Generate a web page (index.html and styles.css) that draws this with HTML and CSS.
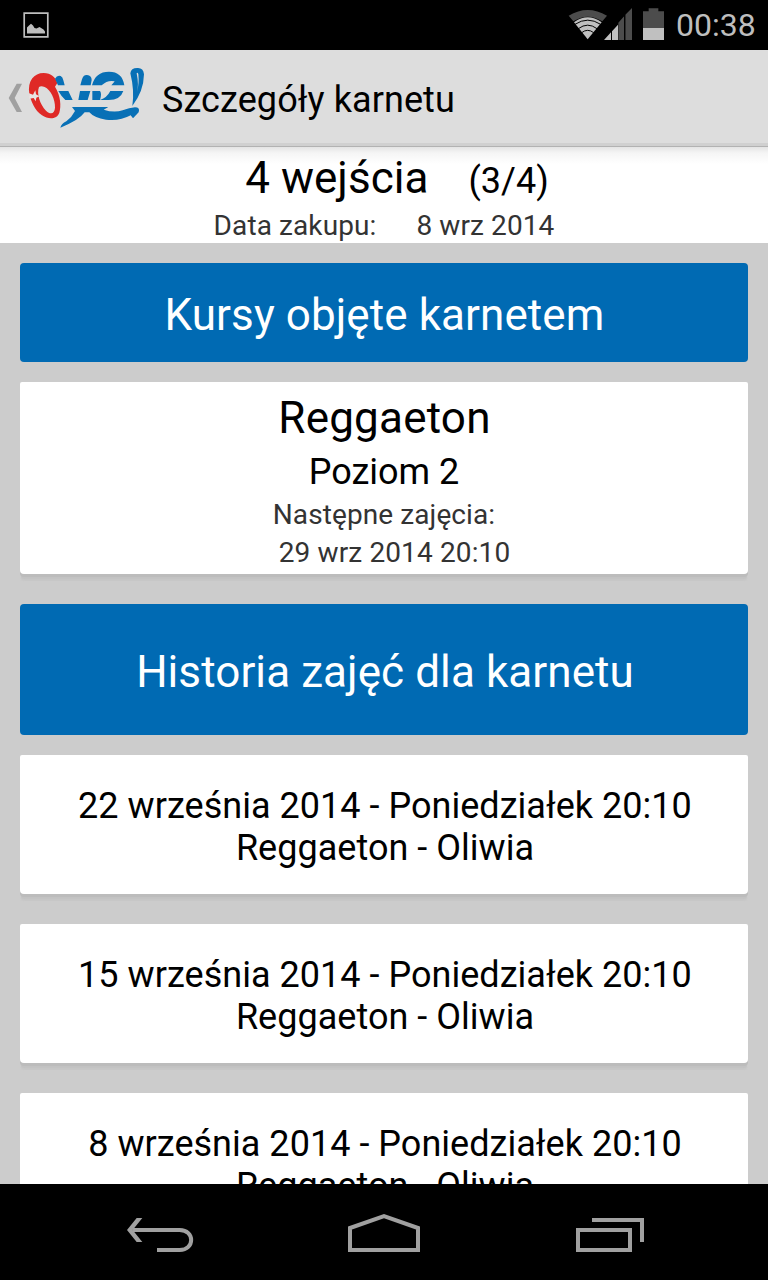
FILE: index.html
```html
<!DOCTYPE html>
<html lang="pl">
<head>
<meta charset="utf-8">
<title>Szczegóły karnetu</title>
<link rel="stylesheet" href="styles.css">
</head>
<body>
<div class="status">
  <svg class="picture" width="26" height="26" viewBox="0 0 26 26"><path d="M1.2 1.2h23.600v23.600H1.200z" fill="none" stroke="#bebebe" stroke-width="1.700"/><path d="M4 21.500v-6l2-2 2-1.700 2 1.700 1.500 2.500 2 .5 3-1.500 4 2.500 1.500 2v2z" fill="#bebebe"/></svg>
  <svg class="signals" width="100" height="50" viewBox="0 0 300 150">
    <path d="M2 47Q59 13 117 47L103 64Q59 36 16 64z" fill="#4c4c4c"/>
    <path d="M18 67Q59 37 101 67L59 118z" fill="#c0c0c0"/>
    <path d="M21 73Q59 48 98 73M31 86Q59 65 87 86M41 98Q59 84 77 98" fill="none" stroke="#000" stroke-width="3"/>
    <path d="M151 68L169 48V120H151zM172 44L192 24V120H172z" fill="#4c4c4c"/>
    <path d="M108 120L129 97V120zM132 94L150 74V120H132z" fill="#c0c0c0"/>
    <path d="M170 40V120" stroke="#000" stroke-width="3"/>
    <path d="M225 34H242V25H271V34H288V84H225z" fill="#4c4c4c"/><path d="M225 84H288V120H225z" fill="#c0c0c0"/>
  </svg>
  <span class="clock">00:38</span>
</div>
<header class="bar">
  <svg class="logo" width="160" height="97" viewBox="0 0 480 291">
    <path d="M50 101H66L44 144 66 186H50L26 144z" fill="#a0a0a0"/>
    <path fill-rule="evenodd" d="M88 132C82 92 102 69 131 69C153 69 168 83 172 99L165 110C182 137 184 168 178 188C171 208 146 209 126 196C104 182 92 151 88 132zM117 111C109 131 120 164 138 182C153 196 164 190 165 173C166 149 152 119 134 111Q123 106 117 111z" fill="#df2926"/>
    <path d="M87 130L99 134 106 121 108 133 118 139 109 143 107 154 101 144 88 146z" fill="#e8e5e4"/>
    <g fill="#0870b6">
      <path d="M165 86Q171 75 182 78Q188 81 190 91L194 106H174zM175 123H205L218 150H196Q184 139 175 123z"/>
      <path d="M241 106L246 88Q250 74 261 75Q275 76 275 90L272 106zM240 123H271L263 150H235z"/>
      <path d="M276 106Q286 65 327 65Q367 65 373 106H334Q339 101 344 94Q323 89 305 106zM277 123H300Q306 130 300 150H277zM331 123H370Q361 150 326 150H300Q321 143 331 123z"/>
      <path d="M216 171H325L311 179Q342 189 368 181Q388 173 405 172Q421 172 416 187L399 205L392 196Q359 214 318 209Q283 204 268 187H254Q237 211 181 233Q184 221 199 214Q216 201 225 183z"/>
      <path fill-rule="evenodd" d="M391 70Q393 53 414 54Q430 54 432 73Q431 124 397 168Q404 122 391 70zM410 70Q417 105 411 125Q418 101 415 72Q412 65 410 70z"/>
    </g>
  </svg>
  <h1>Szczegóły karnetu</h1>
</header>
<main>
  <section class="summary">
    <p class="large"><span>4 wejścia</span><span class="count">(3/4)</span></p>
    <p class="small"><span>Data zakupu:</span><span class="date">8 wrz 2014</span></p>
  </section>
  <div class="content">
    <h2 class="courses">Kursy objęte karnetem</h2>
    <article class="card course">
      <p class="name">Reggaeton</p>
      <p class="level">Poziom 2</p>
      <p class="next">Następne zajęcia:</p>
      <p class="when">29 wrz 2014 20:10</p>
    </article>
    <h2 class="history">Historia zajęć dla karnetu</h2>
    <article class="card entry"><p>22 września 2014 - Poniedziałek 20:10</p><p>Reggaeton - Oliwia</p></article>
    <article class="card entry"><p>15 września 2014 - Poniedziałek 20:10</p><p>Reggaeton - Oliwia</p></article>
    <article class="card entry"><p>8 września 2014 - Poniedziałek 20:10</p><p>Reggaeton - Oliwia</p></article>
  </div>
</main>
<nav class="nav">
  <svg width="100" height="70" viewBox="0 0 300 210" fill="none" stroke="#a0a0a0" stroke-width="12"><path d="M68 90H209C255 90 255 150 209 150H141"/><path d="M51 90L80 54H97L68 90 97 126H80z" fill="#a0a0a0" stroke="none"/></svg>
  <svg width="110" height="70" viewBox="0 0 330 210" fill="none" stroke="#a0a0a0" stroke-width="12"><path d="M60 150V84L162 48 264 84V150z"/></svg>
  <svg width="110" height="70" viewBox="0 0 330 210" fill="none" stroke="#a0a0a0" stroke-width="12"><path d="M54 90H210V150H54zM96 60H246V126"/></svg>
</nav>
</body>
</html>
```
FILE: styles.css
```css
* { box-sizing: border-box; }
body {
  margin: 0;
  width: 768px;
  height: 1280px;
  display: flex;
  flex-direction: column;
  overflow: hidden;
  background: #ccc;
  color: #000;
  font-family: Roboto, sans-serif;
}
h1, h2, p { margin: 0; font-weight: 400; white-space: nowrap; }
svg { display: block; flex: none; }
.status { height: 50px; flex: none; display: flex; align-items: center; background: #000; padding-left: 23px; }
.signals { margin-left: 519px; }
.clock { margin-left: 8px; font-size: 32px; line-height: 52px; color: #bebebe; }
.bar {
  height: 97px;
  flex: none;
  display: flex;
  background: linear-gradient(#ddd 0 93px, #d0d0d0 93px 96px, #b2b2b2 96px);
}
.bar h1 { margin-left: 2px; font-size: 36px; line-height: 101px; letter-spacing: .08px; }
main { flex: 1; min-height: 0; overflow: hidden; }
.summary {
  height: 96px;
  padding-top: 3px;
  background: linear-gradient(#e4e4e4, #f5f5f5 6px, #fff 17px);
}
.summary p { display: flex; justify-content: center; align-items: baseline; }
.large { font-size: 44px; line-height: 56px; padding-left: 26px; letter-spacing: .04px; }
.count { font-size: 36px; margin-left: 40px; }
.small { font-size: 28px; line-height: 33px; color: #333; letter-spacing: .1px; }
.date { margin-left: 40px; }
.content { padding: 20px 20px 0; text-align: center; }
h2 { background: #006ab3; color: #fff; border-radius: 4px; font-size: 44px; letter-spacing: .08px; }
.courses { height: 99px; line-height: 105px; margin-bottom: 20px; padding-left: 1px; }
.history { height: 131px; line-height: 137px; margin-bottom: 20px; padding-left: 2px; }
.card { background: #fff; border-radius: 2px 2px 4px 4px; box-shadow: 0 3px 0 #bcbcbc, 0 6px 1px -1px #c2c2c2, 0 8px 1px -1px #c7c7c7; }
.course { height: 192px; padding-top: 8px; margin-bottom: 30px; }
.name { font-size: 44px; line-height: 56px; letter-spacing: .2px; padding-left: 1px; }
.level { font-size: 36px; line-height: 53px; }
.next { font-size: 28px; line-height: 32px; color: #333; letter-spacing: .1px; }
.when { font-size: 28px; line-height: 44px; color: #333; padding-left: 21px; letter-spacing: .13px; }
.entry { height: 139px; padding-top: 30px; margin-bottom: 30px; font-size: 36px; line-height: 42px; padding-left: 2px; letter-spacing: .03px; }
.nav { height: 96px; flex: none; display: flex; padding: 16px 98px 0 110px; justify-content: space-between; background: #000; }
```
